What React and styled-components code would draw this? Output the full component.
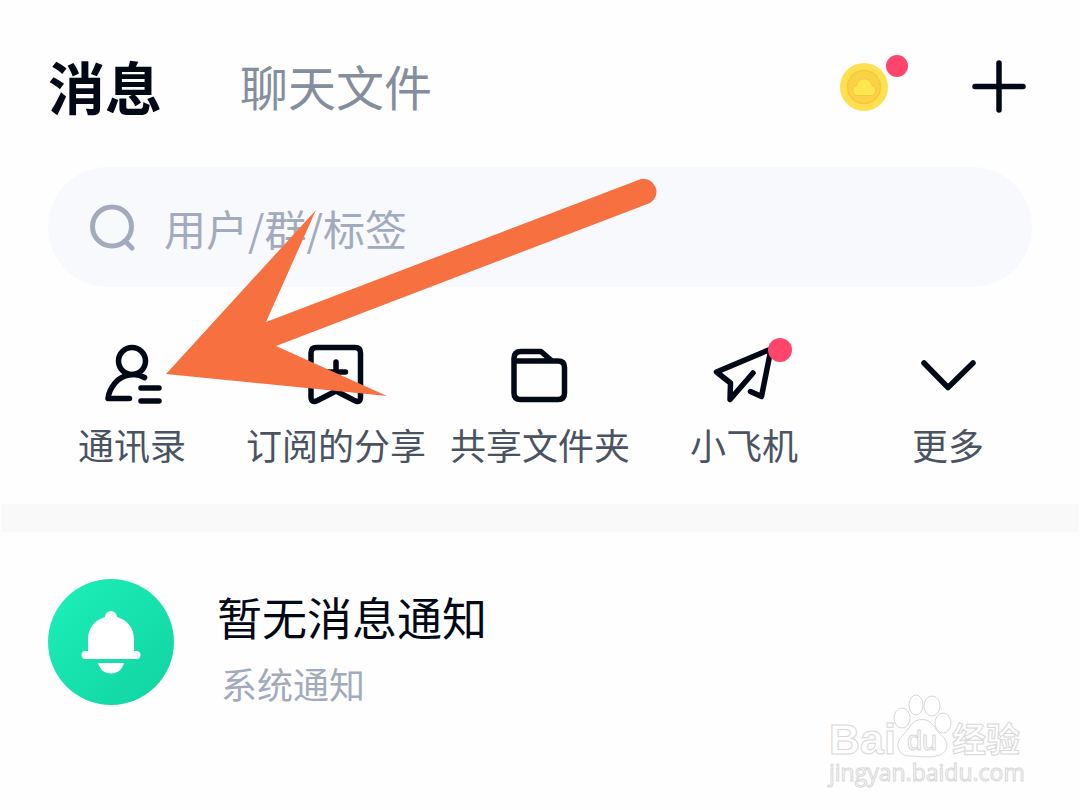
import React, { useState } from "react";
import styled, { createGlobalStyle } from "styled-components";

const shortcuts = [
  { id: "contacts", label: "通讯录", icon: ContactsIcon },
  { id: "subscribed", label: "订阅的分享", icon: BookmarkIcon },
  { id: "folders", label: "共享文件夹", icon: FolderIcon },
  { id: "plane", label: "小飞机", icon: PlaneIcon, unread: true },
  { id: "more", label: "更多", icon: MoreIcon },
];

function ContactsIcon() {
  return (
    <Icon viewBox="0 0 64 64">
      <circle cx="32" cy="18" r="13.500" />
      <path d="M44.500 34.500C35 29 22 31.500 15 40C11 45 8.500 50 8 55.500H29.500" />
      <path d="M41 45H59M41 58H59" />
    </Icon>
  );
}

function BookmarkIcon() {
  return (
    <Icon viewBox="0 0 64 64">
      <path d="M12.500 4.500H51Q56.500 4.500 56.500 10V54Q56.500 60.500 50.500 57.500L32 48L13.500 57.500Q7 60.500 7 54V10Q7 4.500 12.500 4.500Z" />
      <path d="M32 19V39M22.500 29H41.500" />
    </Icon>
  );
}

function FolderIcon() {
  return (
    <Icon viewBox="0 0 64 64">
      <path d="M6 17V50Q6 56.500 12.500 56.500H50Q56.500 56.500 56.500 50V24.500Q56.500 18 50 18H44L33 8.500H13Q6 8.500 6 15.500V18H44" />
    </Icon>
  );
}

function PlaneIcon() {
  return (
    <Icon viewBox="0 0 64 64">
      <path d="M41 30L18 56.500L18.500 40L4.500 29L59 6L49.500 53.500L38.500 48.500" />
    </Icon>
  );
}

function MoreIcon() {
  return (
    <Icon viewBox="0 0 64 64">
      <path d="M8 20L32 44.500L57 20" />
    </Icon>
  );
}

function Coin() {
  return (
    <svg width="48" height="48" viewBox="0 0 48 48" aria-hidden="true">
      <circle cx="24" cy="24" r="24" fill="#fddf52" />
      <circle cx="24" cy="24" r="16.500" fill="#fbd148" stroke="#f9c834" strokeWidth="1.500" />
      <path
        d="M18 32.500a5 5 0 0 1-1.500-9.800a7.800 7.800 0 0 1 15.500 0a5 5 0 0 1-1.500 9.800z"
        fill="#ffe651"
        stroke="#f8c838"
        strokeWidth="1"
      />
    </svg>
  );
}

function Watermark() {
  return (
    <Mark viewBox="0 0 200 100" role="img" aria-label="Baidu 经验">
      <text x="3" y="60" fontSize="43" fontWeight="700">Bai</text>
      <g>
        <ellipse cx="76" cy="24" rx="8" ry="10" />
        <ellipse cx="90" cy="11" rx="7" ry="10" />
        <ellipse cx="106" cy="12" rx="8" ry="10" />
        <ellipse cx="117" cy="29" rx="8" ry="10" />
        <path d="M96 25.500C85 25.500 84 35 77 41C68 49 72 62 83 62C90 62 101 64 110 62C123 60 124 48 115 41C108 35 107 25.500 96 25.500Z" />
      </g>
      <text x="81" y="56" fontSize="27">du</text>
      <text x="126" y="58" fontSize="34" fontWeight="700">经验</text>
      <Site x="3" y="87">jingyan.baidu.com</Site>
    </Mark>
  );
}

function App() {
  const [tab, setTab] = useState("messages");
  const [query, setQuery] = useState("");

  return (
    <Page>
      <GlobalStyle />
      <Header>
        <Tabs>
          <Tab $active={tab === "messages"} onClick={() => setTab("messages")}>
            消息
          </Tab>
          <Tab $active={tab === "files"} onClick={() => setTab("files")}>
            聊天文件
          </Tab>
        </Tabs>
        <Actions>
          <IconButton aria-label="金币">
            <Coin />
            <Dot $top="-8px" $right="-20px" />
          </IconButton>
          <IconButton aria-label="添加">
            <Icon viewBox="0 0 64 64">
              <path d="M31 8V55M7 31.500H55" />
            </Icon>
          </IconButton>
        </Actions>
      </Header>

      <SearchBar>
        <SearchIcon viewBox="0 0 48 48" aria-hidden="true">
          <circle cx="24" cy="23.500" r="19.500" />
          <path d="M38 39L44 45" />
        </SearchIcon>
        <SearchInput
          aria-label="搜索"
          placeholder="用户/群/标签"
          value={query}
          onChange={(e) => setQuery(e.target.value)}
        />
      </SearchBar>

      <Shortcuts>
        {shortcuts.map(({ id, label, icon: Glyph, unread }) => (
          <Shortcut key={id}>
            <Glyph />
            {unread && <Dot $top="-5px" $right="calc(50% - 48px)" $large />}
            {label}
          </Shortcut>
        ))}
      </Shortcuts>

      <Divider />

      <Notice>
        <Avatar viewBox="0 0 126 126" aria-hidden="true">
          <defs>
            <linearGradient id="mint" x1="0" y1="0" x2="1" y2="1">
              <stop offset="0" stopColor="#1df0b8" />
              <stop offset="1" stopColor="#10d3a2" />
            </linearGradient>
          </defs>
          <circle cx="63" cy="63" r="63" fill="url(#mint)" />
          <path
            d="M57 38a6 6 0 0 1 12 0C80 41 86 50 86 60V72H88.500a3.500 3.500 0 0 1 0 8H37.500a3.500 3.500 0 0 1 0-8H40V60C40 50 46 41 57 38ZM50 84H76C74 91 69 94.500 63 94.500S52 91 50 84Z"
            fill="#fff"
          />
        </Avatar>
        <div>
          <NoticeTitle>暂无消息通知</NoticeTitle>
          <NoticeText>系统通知</NoticeText>
        </div>
      </Notice>

      <Arrow viewBox="0 0 500 224" aria-hidden="true">
        <path d="M0 197L150 33L100 145L475 2A13 13 0 0 1 484 26L110 169L221 219Z" />
      </Arrow>
      <Watermark />
    </Page>
  );
}

const GlobalStyle = createGlobalStyle`
  * {
    box-sizing: border-box;
  }

  body {
    margin: 0;
    background: #fefefe;
  }

  body, button, input {
    font-family: "Noto Sans CJK SC", sans-serif;
  }

  button {
    padding: 0;
    border: 0;
    background: none;
    cursor: pointer;
  }
`;

const Page = styled.main`
  position: relative;
  min-height: 100vh;
`;

const Header = styled.header`
  display: flex;
  justify-content: space-between;
  align-items: center;
  padding: 47px 48px 40px;
`;

const Tabs = styled.nav`
  display: flex;
  align-items: center;
  gap: 78px;
  padding-bottom: 4px;
`;

const Tab = styled.button`
  font-size: ${(props) => (props.$active ? "57px" : "48px")};
  font-weight: ${(props) => (props.$active ? 700 : 400)};
  line-height: 76px;
  color: ${(props) => (props.$active ? "#030816" : "#858e9c")};
`;

const Actions = styled.div`
  display: flex;
  align-items: center;
  gap: 80px;
`;

const IconButton = styled.button`
  position: relative;
  display: flex;
`;

const Icon = styled.svg`
  width: 64px;
  height: 64px;
  fill: none;
  stroke: #030816;
  stroke-width: 5.5;
  stroke-linecap: round;
  stroke-linejoin: round;
`;

const Dot = styled.span`
  position: absolute;
  top: ${(props) => props.$top};
  right: ${(props) => props.$right};
  width: ${(props) => (props.$large ? "24px" : "22px")};
  height: ${(props) => (props.$large ? "24px" : "22px")};
  border-radius: 50%;
  background: #ff456c;
`;

const SearchBar = styled.label`
  display: flex;
  align-items: center;
  gap: 28px;
  height: 120px;
  margin: 0 48px;
  padding: 0 40px;
  border-radius: 60px;
  background: #f7f9fd;
`;

const SearchIcon = styled.svg`
  width: 48px;
  height: 48px;
  fill: none;
  stroke: #a2abbd;
  stroke-width: 5;
  stroke-linecap: round;
`;

const SearchInput = styled.input`
  flex: 1;
  min-width: 0;
  height: 64px;
  padding: 0;
  border: 0;
  outline: 0;
  background: transparent;
  font-size: 42px;
  color: #030816;

  &::placeholder {
    color: #a2abbd;
  }
`;

const Shortcuts = styled.nav`
  display: grid;
  grid-template-columns: repeat(5, 1fr);
  padding: 56px 30px 36px;
`;

const Shortcut = styled.button`
  position: relative;
  display: flex;
  flex-direction: column;
  align-items: center;
  gap: 13px;
  font-size: 36px;
  line-height: 48px;
  white-space: nowrap;
  color: #4a5362;
`;

const Divider = styled.div`
  height: 28px;
  margin: 0 1px;
  background: #f9f9fa;
`;

const Notice = styled.article`
  display: flex;
  align-items: center;
  gap: 43px;
  padding: 47px 48px;
`;

const Avatar = styled.svg`
  width: 126px;
  height: 126px;
`;

const NoticeTitle = styled.h2`
  margin: 6px 0 12px;
  font-size: 45px;
  font-weight: 400;
  line-height: 64px;
  color: #030816;
`;

const NoticeText = styled.p`
  margin: 0;
  padding-left: 4px;
  font-size: 36px;
  line-height: 44px;
  color: #a2abbd;
`;

const Arrow = styled.svg`
  position: absolute;
  top: 177px;
  left: 166px;
  width: 500px;
  height: 224px;
  fill: #f77040;
  pointer-events: none;
`;

const Mark = styled.svg`
  position: absolute;
  right: 54px;
  bottom: 16px;
  width: 200px;
  height: 100px;
  overflow: visible;
  fill: #fff;
  stroke: #d8d8d8;
  stroke-width: 1;
  font-family: "Liberation Sans", "Noto Sans CJK SC", sans-serif;
`;

const Site = styled.text`
  font-family: "Open Sans", sans-serif;
  font-size: 23px;
`;

export default App;
